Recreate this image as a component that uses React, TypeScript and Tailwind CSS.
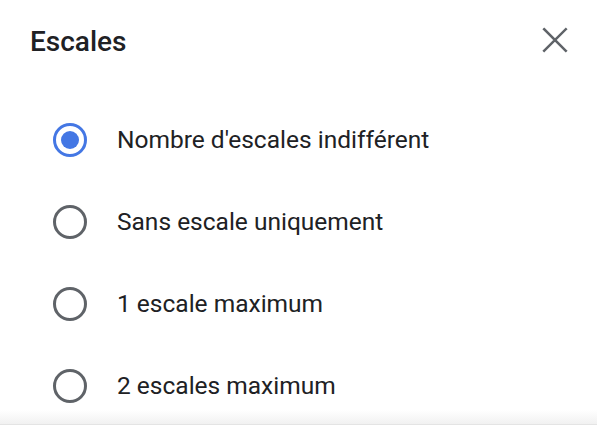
import { useState } from 'react'

const options = [
  "Nombre d'escales indifférent",
  'Sans escale uniquement',
  '1 escale maximum',
  '2 escales maximum',
]

function Radio({ checked }: { checked: boolean }) {
  return (
    <span
      className={`flex items-center justify-center w-[34px] h-[34px] rounded-full border-[3px] shrink-0 ${checked ? 'border-[#4477e4]' : 'border-[#5f6368]'}`}
    >
      {checked && <span className="block w-[18px] h-[18px] rounded-full bg-[#4477e4]" />}
    </span>
  )
}

export default function App() {
  const [selected, setSelected] = useState(0)

  return (
    <div className="relative w-[597px] h-[435px] bg-white overflow-hidden" style={{ fontFamily: 'Roboto, "Noto Sans", sans-serif' }}>
      <div className="flex items-center justify-between h-[84px] pl-[30px] pr-[28px]">
        <h2 className="text-[28px] font-medium text-[#202124]">Escales</h2>
        <button className="w-[28px] h-[28px] mb-[4px] flex items-center justify-center text-[#5f6368]" aria-label="Fermer">
          <svg width="26" height="26" viewBox="0 0 24 24" fill="none" stroke="currentColor" strokeWidth="2.3" strokeLinecap="square">
            <path d="M2 2 22 22M22 2 2 22" />
          </svg>
        </button>
      </div>
      <ul className="flex flex-col pt-[15px]">
        {options.map((label, i) => (
          <li key={label}>
            <button onClick={() => setSelected(i)} className="flex items-center w-full h-[82px] pl-[53px] text-left">
              <Radio checked={selected === i} />
              <span className="ml-[30px] text-[24.5px] text-[#202124]">{label}</span>
            </button>
          </li>
        ))}
      </ul>
      <div className="absolute left-0 right-0 bottom-0 h-[25px] flex flex-col">
        <div className="h-[15px] bg-gradient-to-b from-white/0 to-[#f1f1f1] border-b border-[#e4e4e4]" />
        <div className="flex-1 bg-white" />
      </div>
    </div>
  )
}
